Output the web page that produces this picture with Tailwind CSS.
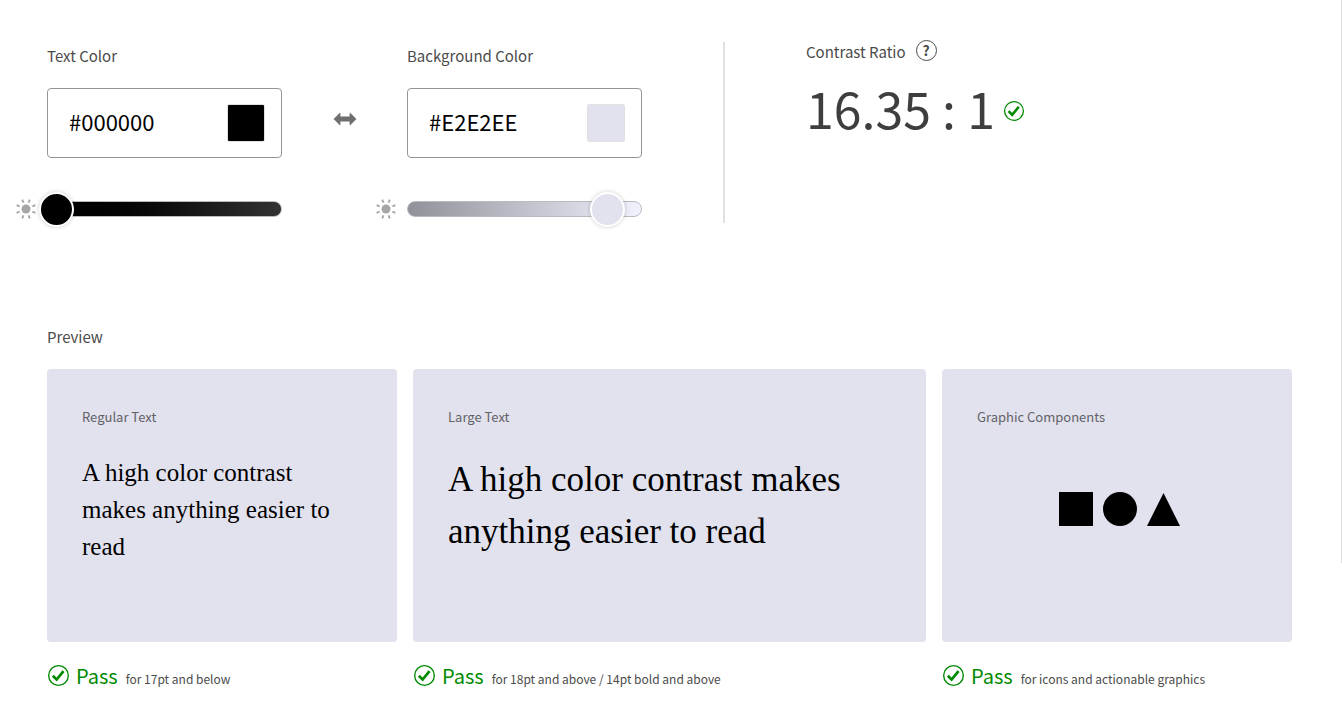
<!DOCTYPE html>
<html lang="en">
<head>
<meta charset="utf-8">
<meta name="viewport" content="width=device-width, initial-scale=1">
<title>Contrast Checker</title>
<script src="https://cdn.jsdelivr.net/npm/@tailwindcss/browser@4"></script>
</head>
<body class="bg-white font-['Noto_Sans_CJK_SC','Open_Sans',sans-serif] text-[#4b4b4b]">
<svg class="hidden" aria-hidden="true">
  <symbol id="check" viewBox="0 0 22 22">
    <circle cx="11" cy="11" r="9.4" fill="none" stroke="#008a00" stroke-width="1.3"/>
    <path d="M5.6 11.2 9.2 14.9 15.8 6.8" fill="none" stroke="#008a00" stroke-width="2.6"/>
  </symbol>
  <symbol id="sun" viewBox="0 0 20 20">
    <circle cx="10" cy="10" r="4.5" fill="#a6a6a6"/>
    <g stroke="#a6a6a6" stroke-width="1.9">
      <path d="M12.6 3.6 13.8.6M16.4 7.4 19.4 6.2M16.4 12.6 19.4 13.8M12.6 16.4 13.8 19.4M7.4 16.4 6.2 19.4M3.6 12.6.6 13.8M3.6 7.4.6 6.2M7.4 3.6 6.2.6"/>
    </g>
  </symbol>
</svg>
<div class="flex items-start">
  <main class="min-w-0 flex-1 pt-[42px] pr-[49px] pl-4">
    <div class="flex items-start">
      <div class="grid grid-cols-[31px_235px_94px_31px_235px] items-center">
        <label for="text-hex" class="col-start-2 mb-[18px] text-[15px] leading-7">Text Color</label>
        <label for="bg-hex" class="col-start-5 mb-[18px] text-[15px] leading-7">Background Color</label>

        <div class="col-start-2 flex h-[70px] items-center rounded border border-[#959595] pr-4 pl-[21px]">
          <input id="text-hex" type="text" value="#000000" class="min-w-0 flex-1 pb-1 text-[22px] leading-8 text-black outline-none">
          <input type="color" value="#000000" aria-label="Pick text color" class="size-[38px] appearance-none rounded-xs border border-[#e1e1e1] p-0 [&::-webkit-color-swatch-wrapper]:p-0 [&::-webkit-color-swatch]:border-0">
        </div>
        <button type="button" aria-label="Swap colors" class="col-span-2 mb-2 justify-self-center">
          <svg class="h-[14px] w-6" viewBox="0 0 24 14" fill="#6e6e6e"><path d="M.6 7 6.6 1Q7.4.4 7.4 1.4V4.5H16.6V1.4Q16.6.4 17.4 1L23.4 7 17.4 13Q16.6 13.6 16.6 12.6V9.5H7.4V12.6Q7.4 13.6 6.6 13Z"/></svg>
        </button>
        <div class="col-start-5 flex h-[70px] items-center rounded border border-[#959595] pr-4 pl-[21px]">
          <input id="bg-hex" type="text" value="#E2E2EE" class="min-w-0 flex-1 pb-1 text-[22px] leading-8 text-black outline-none">
          <input type="color" value="#e2e2ee" aria-label="Pick background color" class="size-[38px] appearance-none rounded-xs border border-[#e1e1e1] p-0 [&::-webkit-color-swatch-wrapper]:p-0 [&::-webkit-color-swatch]:border-0">
        </div>

        <svg class="col-start-1 mt-[33px] size-5" aria-hidden="true"><use href="#sun"/></svg>
        <div class="mt-[33px] flex h-9 items-center">
          <input type="range" min="0" max="200" value="0" aria-label="Text color lightness" class="h-4 w-full appearance-none rounded-full border border-[#b9b9b9] bg-linear-to-r from-black to-[#333333] [&::-webkit-slider-thumb]:-ml-[9px] [&::-webkit-slider-thumb]:size-[35px] [&::-webkit-slider-thumb]:appearance-none [&::-webkit-slider-thumb]:rounded-full [&::-webkit-slider-thumb]:border-2 [&::-webkit-slider-thumb]:border-white [&::-webkit-slider-thumb]:bg-black [&::-webkit-slider-thumb]:shadow-[0_0_4px_rgba(0,0,0,0.2)]">
        </div>
        <svg class="col-start-4 mt-[33px] size-5" aria-hidden="true"><use href="#sun"/></svg>
        <div class="mt-[33px] flex h-9 items-center">
          <input type="range" min="0" max="200" value="193" aria-label="Background color lightness" class="h-4 w-full appearance-none rounded-full border border-[#b9b9c1] bg-linear-to-r from-[#919199] to-[#f2f2ff] [&::-webkit-slider-thumb]:-ml-[9px] [&::-webkit-slider-thumb]:size-[35px] [&::-webkit-slider-thumb]:appearance-none [&::-webkit-slider-thumb]:rounded-full [&::-webkit-slider-thumb]:border-2 [&::-webkit-slider-thumb]:border-white [&::-webkit-slider-thumb]:bg-[#e2e2ee] [&::-webkit-slider-thumb]:shadow-[0_0_4px_rgba(0,0,0,0.2)]">
        </div>
      </div>

      <div class="ml-[81px] h-[181px] w-0.5 bg-[#e1e1e1]"></div>

      <section class="ml-[81px]">
        <div class="flex items-center gap-2.5">
          <h2 class="text-[15px] leading-[18px]">Contrast Ratio</h2>
          <button type="button" aria-label="About contrast ratio" class="-mt-0.5 flex size-[21px] items-center justify-center rounded-full border border-[#4b4b4b] pb-px text-[14px] leading-5 font-bold">?</button>
        </div>
        <div class="mt-2.5 flex items-center gap-2">
          <p class="mb-2 text-[50px] leading-[72px] text-[#3e3e3e]">16.35 : 1</p>
          <svg class="size-[22px]" role="img" aria-label="Pass"><use href="#check"/></svg>
        </div>
      </section>
    </div>

    <section class="mt-24 pl-[31px]">
      <h2 class="text-[15px] leading-7">Preview</h2>
      <div class="mt-[18px] grid grid-cols-[350fr_513fr_350fr] gap-x-4 gap-y-5">
        <article class="h-[273px] rounded bg-[#e2e2ee] px-[35px] pt-[38px]">
          <h3 class="text-[13px] leading-5 text-[#616166]">Regular Text</h3>
          <p class="mt-[27px] font-['Liberation_Serif',serif] text-[25px] leading-[37px] text-black">A high color contrast makes anything easier to read</p>
        </article>
        <article class="h-[273px] rounded bg-[#e2e2ee] px-[35px] pt-[38px]">
          <h3 class="text-[13px] leading-5 text-[#616166]">Large Text</h3>
          <p class="mt-[27px] font-['Liberation_Serif',serif] text-[35px] leading-[52px] text-black">A high color contrast makes anything easier to read</p>
        </article>
        <article class="h-[273px] rounded bg-[#e2e2ee] px-[35px] pt-[38px]">
          <h3 class="text-[13px] leading-5 text-[#616166]">Graphic Components</h3>
          <div class="mt-[65px] flex items-end justify-center gap-2.5 pl-1">
            <div class="size-[34px] bg-black"></div>
            <div class="size-[34px] rounded-full bg-black"></div>
            <svg class="size-[33px]" viewBox="0 0 33 33"><path d="M16.5 0 33 33H0Z"/></svg>
          </div>
        </article>
        <div class="flex items-start gap-1.5">
          <svg class="mt-0.5 size-[23px]" aria-hidden="true"><use href="#check"/></svg>
          <p class="flex items-baseline gap-2 text-[12px] leading-7"><strong class="text-[20px] leading-7 font-normal text-[#008a00]">Pass</strong>for 17pt and below</p>
        </div>
        <div class="flex items-start gap-1.5">
          <svg class="mt-0.5 size-[23px]" aria-hidden="true"><use href="#check"/></svg>
          <p class="flex items-baseline gap-2 text-[12px] leading-7"><strong class="text-[20px] leading-7 font-normal text-[#008a00]">Pass</strong>for 18pt and above / 14pt bold and above</p>
        </div>
        <div class="flex items-start gap-1.5">
          <svg class="mt-0.5 size-[23px]" aria-hidden="true"><use href="#check"/></svg>
          <p class="flex items-baseline gap-2 text-[12px] leading-7"><strong class="text-[20px] leading-7 font-normal text-[#008a00]">Pass</strong>for icons and actionable graphics</p>
        </div>
      </div>
    </section>
  </main>
  <div class="h-[563px] w-px bg-[#e1e1e1]"></div>
</div>
</body>
</html>
